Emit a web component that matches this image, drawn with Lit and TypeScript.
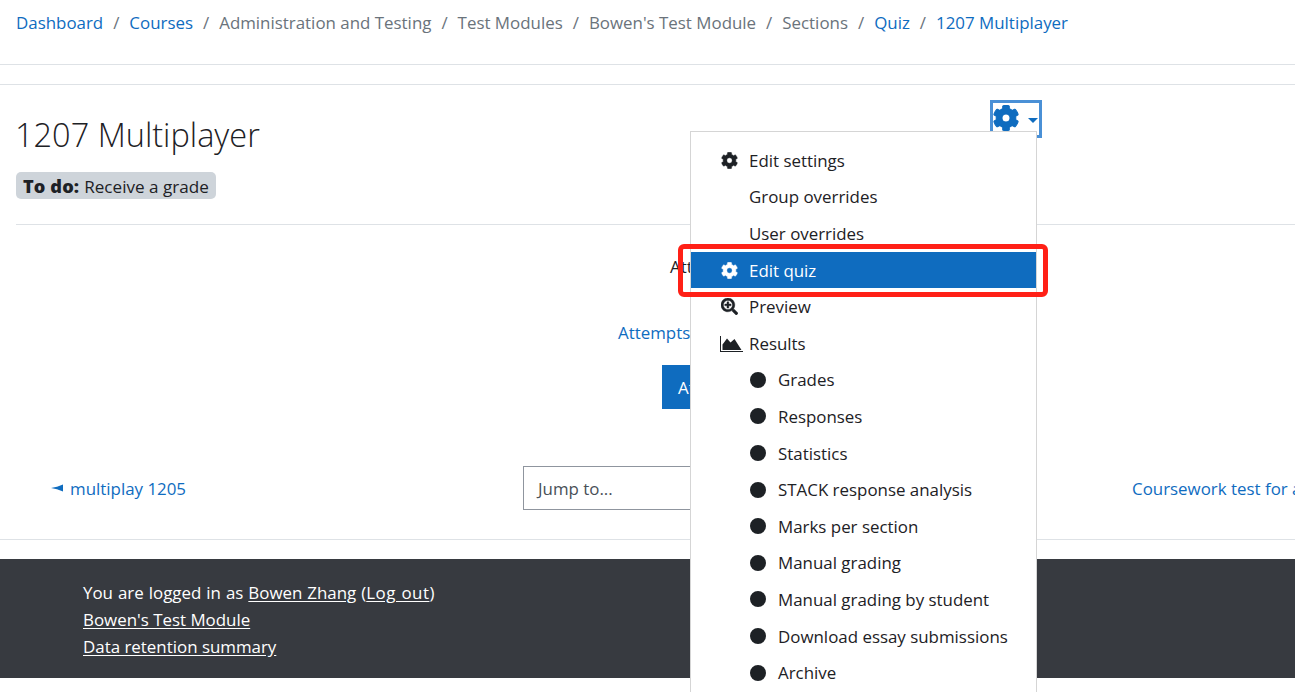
import { LitElement, html, css, svg } from "lit";
import { customElement } from "lit/decorators.js";

const COG = "M487.4 315.7l-42.6-24.6c4.3-23.2 4.3-47 0-70.2l42.6-24.6c4.9-2.8 7.1-8.6 5.5-14-11.1-35.6-30-67.8-54.7-94.6-3.8-4.1-10-5.1-14.8-2.3L380.8 110c-17.9-15.4-38.5-27.3-60.8-35.1V25.8c0-5.6-3.9-10.5-9.4-11.7-36.7-8.2-74.3-7.8-109.2 0-5.5 1.2-9.4 6.1-9.4 11.7V75c-22.2 7.9-42.8 19.8-60.8 35.1L88.7 85.5c-4.9-2.8-11-1.9-14.8 2.3-24.7 26.7-43.6 58.9-54.7 94.6-1.7 5.4.6 11.2 5.5 14L67.3 221c-4.3 23.2-4.3 47 0 70.2l-42.6 24.6c-4.9 2.8-7.1 8.6-5.5 14 11.1 35.6 30 67.8 54.7 94.6 3.8 4.1 10 5.1 14.8 2.3l42.6-24.6c17.9 15.4 38.5 27.3 60.8 35.1v49.2c0 5.6 3.9 10.5 9.4 11.7 36.7 8.2 74.3 7.8 109.2 0 5.5-1.2 9.4-6.1 9.4-11.7v-49.2c22.2-7.9 42.8-19.8 60.8-35.1l42.6 24.6c4.9 2.8 11 1.9 14.8-2.3 24.7-26.7 43.6-58.9 54.7-94.6 1.5-5.5-.7-11.3-5.6-14.1zM256 336c-44.1 0-80-35.9-80-80s35.9-80 80-80 80 35.9 80 80-35.9 80-80 80z";
const SEARCH = "M304 192v32c0 6.6-5.4 12-12 12h-56v56c0 6.6-5.4 12-12 12h-32c-6.6 0-12-5.4-12-12v-56h-56c-6.6 0-12-5.4-12-12v-32c0-6.6 5.4-12 12-12h56v-56c0-6.6 5.4-12 12-12h32c6.6 0 12 5.4 12 12v56h56c6.6 0 12 5.4 12 12zm201 284.7L476.7 505c-9.4 9.4-24.6 9.4-33.9 0L343 405.3c-4.5-4.5-7-10.6-7-17V372c-35.3 27.6-79.7 44-128 44C93.1 416 0 322.9 0 208S93.1 0 208 0s208 93.1 208 208c0 48.3-16.4 92.7-44 128h16.3c6.4 0 12.5 2.5 17 7l99.7 99.7c9.3 9.4 9.3 24.6 0 34zM344 208c0-75.2-60.8-136-136-136S72 132.8 72 208s60.8 136 136 136 136-60.8 136-136z";

const icon = (d: string, cls = "ico") => html`<svg class=${cls} viewBox="0 0 512 512" fill="currentColor">${svg`<path d=${d}></path>`}</svg>`;

const crumbs: [string, boolean][] = [
  ["Dashboard", true], ["Courses", true], ["Administration and Testing", false],
  ["Test Modules", false], ["Bowen's Test Module", false], ["Sections", false],
  ["Quiz", true], ["1207 Multiplayer", true],
];
const subs = ["Grades", "Responses", "Statistics", "STACK response analysis", "Marks per section",
  "Manual grading", "Manual grading by student", "Download essay submissions", "Archive"];

@customElement("app-root")
export class AppRoot extends LitElement {
  static styles = css`
    :host { display: block; position: relative; width: 1295px; height: 692px; overflow: hidden; background: #fff;
      font-family: "Open Sans", "Noto Sans", sans-serif; font-size: 16.9px; color: #1d2125; }
    a { color: #0f6cbf; text-decoration: none; }
    .crumbs { height: 65px; box-sizing: border-box; padding: 10px 0 0 16px; display: flex; white-space: nowrap; line-height: 26px; border-bottom: 1px solid #dee2e6; color: #6a737b; }
    .sep { width: 26.2px; text-align: center; color: #6a737b; }
    .spacer { height: 19px; border-bottom: 1px solid #dee2e6; }
    .main { margin-left: 16px; height: 140px; box-sizing: border-box; border-bottom: 1px solid #dee2e6; }
    h2 { margin: 0 0 0 -1px; padding-top: 27px; font-weight: 300; font-size: 32.5px; line-height: 46px; }
    .badge { display: inline-flex; align-items: center; gap: 5px; height: 27px; box-sizing: border-box; margin-top: 14px; padding: 1px 7px 0; border-radius: 5px; background: #ced4da; font-size: 17.1px; }
    .badge b { font-weight: 800; font-size: 18.2px; letter-spacing: 0.1px; }
    .center { height: 314px; position: relative; }
    .activity { display: flex; flex-direction: column; align-items: flex-start; }
    .allowed { margin: 29px 0 0 670px; line-height: 26px; white-space: nowrap; }
    .attempts { margin: 40px 0 0 618px; line-height: 26px; white-space: nowrap; }
    .btn { margin: 19px 0 0 662px; background: #0f6cbf; color: #fff; height: 44px; width: 130px; box-sizing: border-box; padding: 0 16px; display: flex; align-items: center; white-space: nowrap; }
    .nav { display: flex; align-items: center; height: 44px; margin-top: 57px; white-space: nowrap; }
    .prev { margin-left: 51px; display: flex; align-items: center; gap: 5px; width: 472px; flex: none; }
    .prev svg { width: 14px; height: 8px; }
    .jump { width: 300px; height: 44px; box-sizing: border-box; border: 1px solid #8f959e; padding: 0 14px; display: flex; align-items: center; color: #495057; flex: none; }
    .next { margin-left: 309px; flex: none; }
    .rule { height: 29px; border-bottom: 1px solid #dee2e6; }
    footer { margin-top: 20px; height: 119px; box-sizing: border-box; background: #373a40; color: #fff; padding: 20px 0 0 83px; line-height: 27px; }
    footer a { color: #fff; text-decoration: underline; text-underline-offset: 2px; }
    footer div { white-space: nowrap; }
    .login { word-spacing: 0.6px; }
    .logout { letter-spacing: 0.5px; }
    .gearbtn { position: absolute; left: 990px; top: 100px; width: 52px; height: 38px; box-sizing: border-box; border: 3px solid #4a90d6; color: #0f6cbf; }
    .gearbtn .big { position: absolute; left: 0; top: 2px; width: 26px; height: 26px; stroke: currentColor; stroke-width: 22; }
    .caret { position: absolute; left: 35px; top: 15px; border: 5px solid transparent; border-top-color: #0f6cbf; border-bottom: 0; }
    .menu { position: absolute; left: 690px; top: 131px; width: 347px; height: 600px; box-sizing: border-box; border: 1px solid #d5d5d5; background: #fff; padding-top: 10px; }
    .item { height: 36.6px; display: flex; align-items: center; padding-left: 30px; white-space: nowrap; }
    .item .slot { width: 28px; flex: none; display: flex; }
    .ico { width: 17px; height: 17px; stroke: currentColor; stroke-width: 12; }
    .chart { width: 23px; height: 17px; margin-left: -1px; }
    .item.active { background: #0f6cbf; color: #fff; }
    .item.sub { padding-left: 59px; }
    .dot { width: 16px; height: 16px; border-radius: 50%; background: #1d2125; margin-right: 12px; flex: none; }
    .red { position: absolute; left: 678px; top: 244px; width: 370px; height: 53px; box-sizing: border-box; border: 5px solid #ff2016; border-radius: 6px; }
  `;

  render() {
    return html`
      <nav class="crumbs">
        ${crumbs.map(([t, link], i) => html`${i ? html`<span class="sep">/</span>` : ""}${link ? html`<a href="#">${t}</a>` : html`<span>${t}</span>`}`)}
      </nav>
      <div class="spacer"></div>
      <section class="main">
        <h2>1207 Multiplayer</h2>
        <span class="badge"><b>To do:</b> Receive a grade</span>
      </section>
      <section class="center">
        <div class="activity">
          <div class="allowed">Attempts allowed: 1</div>
          <a class="attempts" href="#">Attempts: 0</a>
          <div class="btn">Attempt quiz</div>
        </div>
        <div class="nav">
          <a class="prev" href="#"><svg viewBox="0 0 14 8" fill="#0f6cbf"><polygon points="0,4 6,2.8 12,0.5 12,7.5 6,5.2"></polygon></svg>multiplay 1205</a>
          <div class="jump">Jump to...</div>
          <a class="next" href="#">Coursework test for all ►</a>
        </div>
        <div class="rule"></div>
      </section>
      <footer>
        <div class="login">You are logged in as <a href="#">Bowen Zhang</a> (<a class="logout" href="#">Log out</a>)</div>
        <div><a href="#">Bowen's Test Module</a></div>
        <div><a href="#">Data retention summary</a></div>
      </footer>
      <div class="gearbtn">${icon(COG, "big")}<span class="caret"></span></div>
      <div class="menu">
        <div class="item"><span class="slot">${icon(COG)}</span>Edit settings</div>
        <div class="item"><span class="slot"></span>Group overrides</div>
        <div class="item"><span class="slot"></span>User overrides</div>
        <div class="item active"><span class="slot">${icon(COG)}</span>Edit quiz</div>
        <div class="item"><span class="slot">${icon(SEARCH)}</span>Preview</div>
        <div class="item"><span class="slot"><svg class="chart" viewBox="0 0 23 17" fill="currentColor"><path d="M0 1h1v15h22v1H0z"></path><path d="M2.5 15V9.5l4.5-6 3.5 4 4-3.5 7 11z"></path></svg></span>Results</div>
        ${subs.map((s) => html`<div class="item sub"><span class="dot"></span>${s}</div>`)}
      </div>
      <div class="red"></div>
    `;
  }
}
